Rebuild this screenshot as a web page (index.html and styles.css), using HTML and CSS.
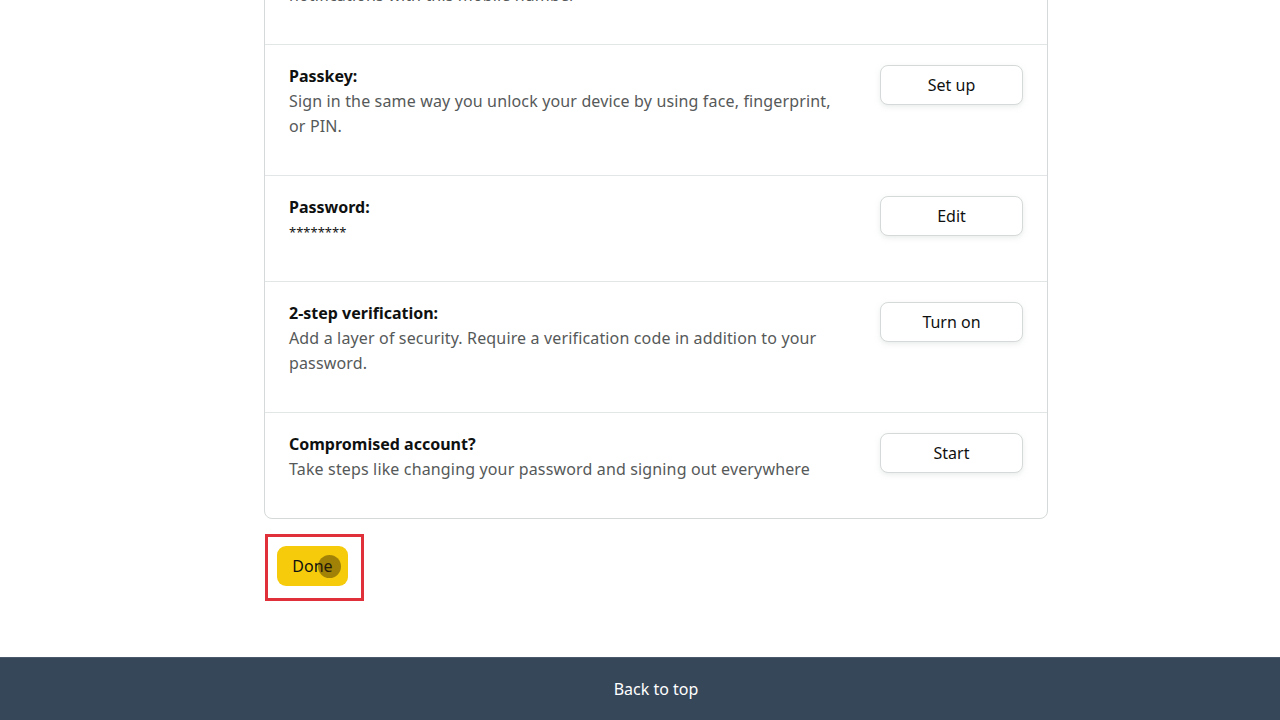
FILE: index.html
```html
<!DOCTYPE html>
<html lang="en">
<head>
<meta charset="utf-8">
<title>Login &amp; security</title>
<link rel="stylesheet" href="styles.css">
</head>
<body>
<div class="page">
  <main class="content">
    <section class="card">
      <div class="row">
        <div class="info">
          <div class="title">Primary mobile number:</div>
          <div class="desc">Quickly sign in, easily recover passwords, and receive security notifications with this mobile number</div>
        </div>
        <button class="btn">Edit</button>
      </div>
      <div class="row">
        <div class="info">
          <div class="title">Passkey:</div>
          <div class="desc">Sign in the same way you unlock your device by using face, fingerprint, or PIN.</div>
        </div>
        <button class="btn">Set up</button>
      </div>
      <div class="row">
        <div class="info">
          <div class="title">Password:</div>
          <div class="stars">********</div>
        </div>
        <button class="btn">Edit</button>
      </div>
      <div class="row">
        <div class="info">
          <div class="title">2-step verification:</div>
          <div class="desc">Add a layer of security. Require a verification code in addition to your password.</div>
        </div>
        <button class="btn">Turn on</button>
      </div>
      <div class="row">
        <div class="info">
          <div class="title">Compromised account?</div>
          <div class="desc">Take steps like changing your password and signing out everywhere</div>
        </div>
        <button class="btn">Start</button>
      </div>
    </section>
    <div class="done-wrap">
      <div class="highlight">
        <button class="done">Done<span class="cursor"></span></button>
      </div>
    </div>
  </main>
</div>
<footer class="footer">
  <a class="back" href="#">Back to top</a>
</footer>
</body>
</html>
```
FILE: styles.css
```css
* { box-sizing: border-box; }
html, body { margin: 0; padding: 0; }
body {
  font-family: "Noto Sans", "Open Sans", Arial, sans-serif;
  font-size: 16px;
  color: #0f1111;
  background: #ffffff;
  overflow: hidden;
}
.page {
  padding-left: 32px;
  display: flex;
  justify-content: center;
}
.content {
  width: 784px;
  margin-top: -87px;
}
.card {
  border: 1px solid #d5d9d9;
  border-radius: 8px;
  overflow: hidden;
}
.row {
  display: flex;
  justify-content: space-between;
  align-items: flex-start;
  padding: 19px 24px 36px 24px;
  border-top: 1px solid #e3e6e6;
}
.row:first-child { border-top: none; }
.info {
  width: 552px;
  line-height: 25px;
}
.title {
  font-weight: 700;
  font-size: 16px;
}
.desc {
  color: #565959;
  font-size: 16px;
  letter-spacing: 0.15px;
}
.stars {
  font-size: 13px;
  line-height: 25px;
}
.btn {
  margin-top: 1px;
  width: 143px;
  height: 40px;
  background: #fff;
  border: 1px solid #d5d9d9;
  border-radius: 8px;
  box-shadow: 0 2px 5px rgba(213, 217, 217, 0.5);
  font-family: inherit;
  font-size: 16px;
  color: #0f1111;
}
.done-wrap {
  margin-top: 15px;
  padding-left: 1px;
  display: flex;
}
.highlight {
  border: 3px solid #e0303a;
  padding: 9px 13px 12px 9px;
}
.done {
  position: relative;
  width: 71px;
  height: 40px;
  border: none;
  border-radius: 9px;
  background: #f5cb0c;
  font-family: inherit;
  font-size: 16px;
  color: #0f1111;
}
.cursor {
  position: absolute;
  left: 41px;
  top: 9px;
  width: 23px;
  height: 23px;
  border-radius: 50%;
  background: rgba(60, 40, 0, 0.45);
}
.footer {
  margin-top: 56px;
  height: 63px;
  background: #37475a;
  border-top: 1px solid #4a5a6c;
  padding-left: 32px;
  display: flex;
  align-items: center;
  justify-content: center;
}
.back {
  color: #ffffff;
  text-decoration: none;
  font-size: 16px;
}
```
